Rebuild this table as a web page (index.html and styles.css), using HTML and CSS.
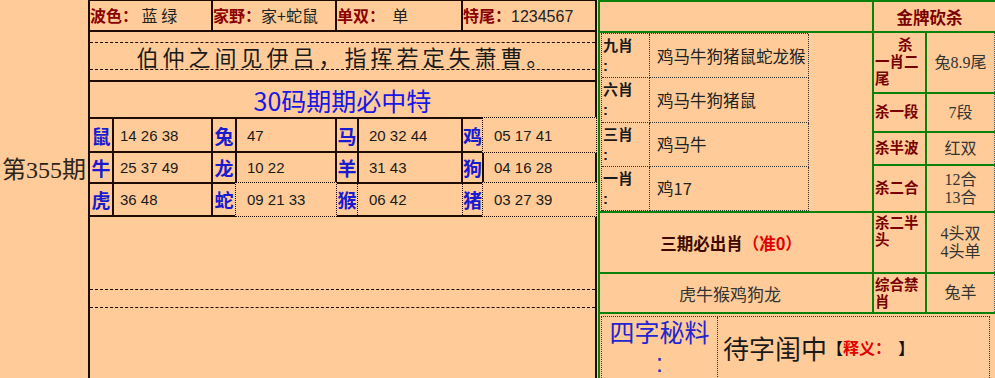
FILE: index.html
```html
<!DOCTYPE html>
<html lang="zh">
<head>
<meta charset="utf-8">
<title>第355期</title>
<link rel="stylesheet" href="styles.css">
</head>
<body>
<div class="page">
  <div class="period">第355期</div>

  <div class="lt">
    <div class="hc"><b>波色：</b> 蓝 绿</div>
    <div class="hc"><b>家野：</b>家+蛇鼠</div>
    <div class="hc"><b>单双：</b>&nbsp; 单</div>
    <div class="hc"><b>特尾：</b><span class="hnum">1234567</span></div>

    <div class="poem"><div class="poem-in">伯仲之间见伊吕，指挥若定失萧曹。</div></div>

    <div class="title">30码期期必中特</div>

    <div class="zl">鼠</div><div class="zn first">14 26 38</div>
    <div class="zl">兔</div><div class="zn">47</div>
    <div class="zl">马</div><div class="zn">20 32 44</div>
    <div class="zl">鸡</div><div class="zn dot">05 17 41</div>

    <div class="zl">牛</div><div class="zn first">25 37 49</div>
    <div class="zl">龙</div><div class="zn">10 22</div>
    <div class="zl">羊</div><div class="zn">31 43</div>
    <div class="zl">狗</div><div class="zn">04 16 28</div>

    <div class="zl">虎</div><div class="zn first">36 48</div>
    <div class="zl">蛇</div><div class="zn dot">09 21 33</div>
    <div class="zl">猴</div><div class="zn dot side">06 42</div>
    <div class="zl">猪</div><div class="zn dot">03 27 39</div>

    <div class="blank"><div class="blank-in"></div></div>
  </div>

  <div class="rp">
    <div class="empty"></div>
    <div class="gold">金牌砍杀</div>

    <div class="sub">
      <div class="sub-in">
        <div class="sl">九肖<br>:</div><div class="sc">鸡马牛狗猪鼠蛇龙猴</div>
        <div class="sl">六肖<br>:</div><div class="sc">鸡马牛狗猪鼠</div>
        <div class="sl">三肖<br>:</div><div class="sc">鸡马牛</div>
        <div class="sl">一肖<br>:</div><div class="sc">鸡17</div>
      </div>
    </div>

    <div class="rl"><span class="ind">杀</span><span>一肖二</span><span>尾</span></div>
    <div class="rv">兔8.9尾</div>

    <div class="rl">杀一段</div>
    <div class="rv">7段</div>

    <div class="rl">杀半波</div>
    <div class="rv">红双</div>

    <div class="rl">杀二合</div>
    <div class="rv">12合<br>13合</div>

    <div class="sq">三期必出肖<span class="zhun">（准0）</span></div>
    <div class="rl top">杀二半<br>头</div>
    <div class="rv">4头双<br>4头单</div>

    <div class="hu">虎牛猴鸡狗龙</div>
    <div class="rl top2">综合禁<br>肖</div>
    <div class="rv">兔羊</div>

    <div class="bot">
      <div class="bot-in">
        <div class="bot-l">四字秘料<br>:</div>
        <div class="bot-r"><span class="big">待字闺中</span><span class="br">【</span><span class="sy">释义：</span>&nbsp;&nbsp;<span class="br">】</span></div>
      </div>
    </div>
  </div>
</div>
</body>
</html>
```

FILE: styles.css
```css
* { box-sizing: border-box; margin: 0; padding: 0; }
html, body { background: #FFCC99; }
body {
  font-family: "Noto Sans CJK SC", sans-serif;
  color: #1a1a1a;
  overflow: hidden;
}
.page {
  display: flex;
  width: 995px;
  height: 378px;
  overflow: hidden;
}

/* period column */
.period {
  flex: none;
  width: 88px;
  display: flex;
  align-items: center;
  justify-content: center;
  padding-bottom: 44px;
  font-family: "Liberation Serif", "Noto Sans CJK SC", serif;
  font-size: 24px;
  white-space: nowrap;
  color: #2c2418;
}

/* left table */
.lt {
  flex: none;
  display: grid;
  grid-template-columns: 22px 97px 22px 98px 20px 102px 19px 111px;
  grid-template-rows: 29px 48px 35px 32px 29px 31px 1fr;
  gap: 2px;
  background: #1e0c02;
  border-left: 2px solid #1e0c02;
  border-right: 2px solid #1e0c02;
  padding-top: 1px;
  height: 378px;
}
.lt > div { background: #FFCC99; }

.hc {
  grid-column: span 2;
  font-size: 16px;
  line-height: 29px;
  white-space: pre;
  color: #222;
}
.hc b { color: #8b0000; font-weight: 700; }
.hnum { font-family: "Liberation Sans", sans-serif; font-size: 16px; color: #222; }

.poem {
  grid-column: 1 / -1;
  padding-top: 10px;
}
.poem-in {
  height: 28px;
  border-top: 1px dashed #1e0c02;
  border-bottom: 1px dashed #1e0c02;
  font-size: 22px;
  line-height: 26px;
  letter-spacing: 4px;
  text-align: center;
  padding-left: 4px;
  color: #1a1a1a;
}

.title {
  grid-column: 1 / -1;
  text-align: center;
  font-size: 25px;
  line-height: 37px;
  color: #1717e6;
}

.zl {
  display: flex;
  align-items: center;
  justify-content: center;
  font-size: 19px;
  font-weight: 700;
  color: #1a1ad0;
}
.zn {
  display: flex;
  align-items: center;
  padding-left: 10px;
  font-family: "Liberation Sans", sans-serif;
  font-size: 15px;
  color: #1a1a1a;
  white-space: pre;
}
.zn.first { padding-left: 6px; }
.lt > .zn.dot {
  margin: -2px;
  border: 1px dotted #1e0c02;
  padding-left: 11px;
  padding-top: 0;
}
.lt > .zn.dot.side { margin: 0 -2px; border-top: none; border-bottom: none; }

.blank {
  grid-column: 1 / -1;
  padding-top: 72px;
}
.blank-in {
  height: 19px;
  border-top: 1px dashed #1e0c02;
  border-bottom: 1px dashed #1e0c02;
}

/* right panel */
.rp {
  flex: none;
  margin-left: 1px;
  width: 397px;
  height: 378px;
  display: grid;
  grid-template-columns: 272px 51px 68px;
  grid-template-rows: 29px 59px 37px 31px 45px 59px 38px 1fr;
  gap: 2px;
  padding: 2px 0 0 2px;
  background: #0b800b;
}
.rp > div { background: #FFCC99; }

.gold {
  grid-column: 2 / 4;
  display: flex;
  align-items: center;
  justify-content: center;
  padding-right: 10px;
  font-size: 16.5px;
  font-weight: 700;
  color: #7a0000;
}

.sub { grid-column: 1; grid-row: 2 / 6; }
.sub-in {
  margin-left: 1px;
  width: 207px;
  height: 100%;
  display: grid;
  grid-template-columns: 48px 159px;
  grid-template-rows: repeat(4, 1fr);
  border-top: 1px dotted #333;
  border-left: 1px dotted #333;
}
.sl {
  border-right: 1px dotted #333;
  border-bottom: 1px dotted #333;
  font-family: "Liberation Sans", "Noto Sans CJK SC", sans-serif;
  font-size: 15px;
  font-weight: 700;
  line-height: 20px;
  padding: 2px 0 0 1px;
  color: #1a1a1a;
}
.sc {
  border-right: 1px dotted #333;
  border-bottom: 1px dotted #333;
  display: flex;
  align-items: center;
  padding-left: 7px;
  font-size: 16.5px;
  color: #222;
  white-space: nowrap;
}

.rl {
  display: flex;
  flex-direction: column;
  justify-content: center;
  font-family: "Liberation Sans", "Noto Sans CJK SC", sans-serif;
  font-size: 14.5px;
  font-weight: 700;
  line-height: 17px;
  color: #7a0000;
  padding-left: 1px;
}
.rl .ind { padding-left: 23px; }
.rl.top { padding-top: 2px; display: block; }
.rl.top2 { padding-top: 3px; display: block; }

.rv {
  display: flex;
  align-items: center;
  justify-content: center;
  text-align: center;
  font-family: "Liberation Serif", "Noto Sans CJK SC", serif;
  font-size: 16px;
  line-height: 18px;
  color: #333;
  border-right: 1px dotted #555;
}

.sq {
  display: flex;
  align-items: center;
  justify-content: center;
  padding-right: 10px;
  font-size: 16.5px;
  font-weight: 700;
  color: #3d0800;
}
.zhun { color: #e00000; }

.hu {
  display: flex;
  align-items: center;
  justify-content: center;
  padding-right: 12px;
  font-size: 17px;
  color: #333;
}

.bot {
  grid-column: 1 / -1;
  padding: 2px 5px 0 1px;
}
.bot-in {
  display: flex;
  height: 66px;
  border: 1px dotted #333;
}
.bot-l {
  flex: none;
  width: 116px;
  border-right: 1px dotted #333;
  text-align: center;
  font-family: "Liberation Sans", "Noto Sans CJK SC", sans-serif;
  font-size: 25px;
  line-height: 30px;
  padding-top: 1px;
  color: #2424d0;
}
.bot-r {
  display: flex;
  align-items: center;
  padding-left: 5px;
  padding-bottom: 4px;
  white-space: pre;
}
.big { font-size: 26px; color: #1a1a1a; }
.br { font-size: 16px; font-weight: 700; color: #111; }
.sy { font-size: 16px; font-weight: 700; color: #e00000; }
```
